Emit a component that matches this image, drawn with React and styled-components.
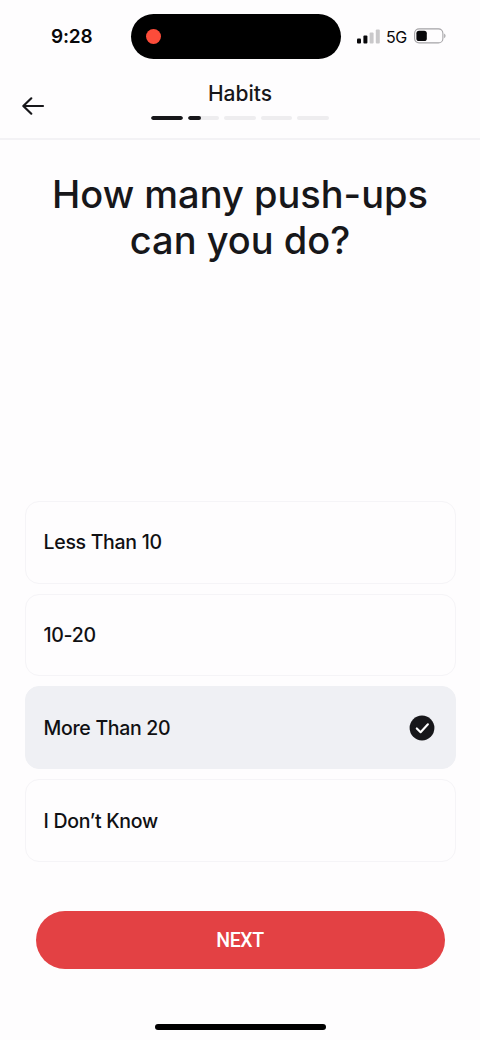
import React, { useState } from 'react';
import styled, { createGlobalStyle } from 'styled-components';

const GlobalStyle = createGlobalStyle`
  * {
    box-sizing: border-box;
  }

  body {
    margin: 0;
    background-color: #fefdfe;
    color: #17171a;
    font-family: Inter, "Liberation Sans", sans-serif;
  }
`;

const Screen = styled.div`
  display: flex;
  flex-direction: column;
  align-items: center;
  width: 480px;
  height: 1040px;
  overflow: hidden;
`;

const StatusBar = styled.div`
  display: grid;
  grid-template-columns: 131px 210px 1fr;
  align-items: center;
  width: 100%;
  height: 44px;
  margin-top: 14px;
  color: #08080a;
`;

const Time = styled.span`
  padding-left: 51px;
  font-size: 19px;
  font-weight: 600;
  letter-spacing: -0.2px;
`;

const Island = styled.div`
  display: flex;
  align-items: center;
  height: 44.5px;
  padding-left: 15px;
  border-radius: 23px;
  background-color: #000;
`;

const RecordingDot = styled.span`
  width: 15px;
  height: 15px;
  border-radius: 50%;
  background-color: #fc4c3a;
`;

const StatusIcons = styled.div`
  display: flex;
  align-items: center;
  padding-left: 16px;
`;

const Network = styled.span`
  width: 22px;
  margin: 1px 6px 0 6px;
  font-size: 16px;
  line-height: 20px;
  letter-spacing: -0.4px;
`;

const Header = styled.header`
  display: grid;
  grid-template-columns: 100px 1fr 100px;
  width: 100%;
  height: 82px;
  border-bottom: 2px solid #f3f2f5;
`;

const BackButton = styled.button`
  display: flex;
  align-items: center;
  height: 24px;
  margin-top: 36px;
  padding: 0 0 0 21px;
  border: none;
  background: none;
  color: #17171a;
`;

const HeaderCenter = styled.div`
  display: flex;
  flex-direction: column;
  align-items: center;
  padding-top: 24px;
`;

const HeaderTitle = styled.h2`
  margin: 0;
  font-size: 21px;
  font-weight: 500;
  line-height: 24px;
`;

const Progress = styled.div`
  display: flex;
  gap: 5px;
  width: 178px;
  margin-top: 10px;
`;

const Segment = styled.div`
  flex: 1;
  height: 4px;
  border-radius: 2px;
  overflow: hidden;
  background-color: #eeedef;
`;

const SegmentFill = styled.div`
  width: ${(props) => props.$value}%;
  height: 100%;
  border-radius: 2px;
  background-color: #17171a;
`;

const Question = styled.h1`
  margin: 31px 0 0;
  font-size: 38px;
  font-weight: 500;
  line-height: 46px;
  letter-spacing: ${(props) => props.$spacing || 0}px;
  text-align: center;
`;

const QuestionLine = styled.span`
  display: block;
  letter-spacing: ${(props) => props.$spacing}px;
`;

const Options = styled.div`
  display: flex;
  flex-direction: column;
  gap: 10px;
  width: 431px;
  margin-top: auto;
`;

const Option = styled.button`
  display: flex;
  align-items: center;
  justify-content: space-between;
  height: 82.8px;
  padding: 0 20px 0 18px;
  border: 1.5px solid ${(props) => (props.$selected ? '#eff0f4' : '#f5f4f7')};
  border-radius: 14px;
  background-color: ${(props) => (props.$selected ? '#eff0f4' : '#fefdfe')};
  color: #101013;
  font-family: inherit;
  font-size: 19.5px;
  font-weight: 500;
  text-align: left;
`;

const OptionLabel = styled.span`
  letter-spacing: ${(props) => props.$spacing}px;
`;

const NextButton = styled.button`
  width: 409px;
  height: 58px;
  margin-top: 49px;
  border: none;
  border-radius: 29px;
  background-color: #e34144;
  color: #fff;
  font-family: Roboto, Inter, sans-serif;
  font-size: 19.5px;
  font-weight: 500;
  letter-spacing: -0.4px;
`;

const HomeIndicator = styled.div`
  width: 171px;
  height: 6px;
  margin: 55px 0 10px;
  border-radius: 3px;
  background-color: #000;
`;

const SignalIcon = () => (
  <svg width="23" height="16" viewBox="0 0 23 16">
    <rect x="0" y="10.5" width="4" height="5" rx="1" fill="#08080a" />
    <rect x="6.4" y="7.5" width="4" height="8" rx="1" fill="#08080a" />
    <rect x="12.6" y="4.5" width="4" height="11" rx="1" fill="#c9c8ca" />
    <rect x="18.8" y="1.5" width="4" height="14" rx="1" fill="#c9c8ca" />
  </svg>
);

const BatteryIcon = () => (
  <svg width="33" height="16" viewBox="0 0 33 16">
    <rect x="0.6" y="0.9" width="28.3" height="14" rx="4.5" fill="none" stroke="#a4a3a6" strokeWidth="1.1" />
    <rect x="2.4" y="2.7" width="10.4" height="10.4" rx="2.6" fill="#08080a" />
    <path d="M30.2 5.6v4.6c1.8-.9 1.8-3.7 0-4.6z" fill="#a4a3a6" />
  </svg>
);

const BackIcon = () => (
  <svg width="24" height="20" viewBox="0 0 24 20" fill="none">
    <path
      d="M22 10H2.5M10.3 2.3L2.3 10l8 7.7"
      stroke="currentColor"
      strokeWidth="2.2"
      strokeLinecap="round"
      strokeLinejoin="round"
    />
  </svg>
);

const CheckIcon = () => (
  <svg width="26" height="26" viewBox="0 0 26 26" fill="none">
    <circle cx="13" cy="13" r="12.4" fill="#17171a" />
    <path d="M7.8 13.4l3.8 3.8 7.3-7.9" stroke="#fff" strokeWidth="2.1" strokeLinecap="round" strokeLinejoin="round" />
  </svg>
);

const segments = [100, 42, 0, 0, 0];

const options = [
  { label: 'Less Than 10', spacing: -0.3 },
  { label: '10-20', spacing: -0.3 },
  { label: 'More Than 20', spacing: -0.3 },
  { label: 'I Don’t Know', spacing: -0.3 },
];

const App = () => {
  const [selected, setSelected] = useState('More Than 20');

  return (
    <>
      <GlobalStyle />
      <Screen>
        <StatusBar>
          <Time>9:28</Time>
          <Island>
            <RecordingDot />
          </Island>
          <StatusIcons>
            <SignalIcon />
            <Network>5G</Network>
            <BatteryIcon />
          </StatusIcons>
        </StatusBar>

        <Header>
          <BackButton aria-label="Back">
            <BackIcon />
          </BackButton>
          <HeaderCenter>
            <HeaderTitle>Habits</HeaderTitle>
            <Progress>
              {segments.map((value, index) => (
                <Segment key={index}>
                  <SegmentFill $value={value} />
                </Segment>
              ))}
            </Progress>
          </HeaderCenter>
        </Header>

        <Question>
          <QuestionLine $spacing={0}>How many push-ups</QuestionLine>
          <QuestionLine $spacing={0}>can you do?</QuestionLine>
        </Question>

        <Options>
          {options.map(({ label, spacing }) => (
            <Option key={label} $selected={label === selected} onClick={() => setSelected(label)}>
              <OptionLabel $spacing={spacing}>{label}</OptionLabel>
              {label === selected && <CheckIcon />}
            </Option>
          ))}
        </Options>

        <NextButton>NEXT</NextButton>
        <HomeIndicator />
      </Screen>
    </>
  );
};

export default App;
